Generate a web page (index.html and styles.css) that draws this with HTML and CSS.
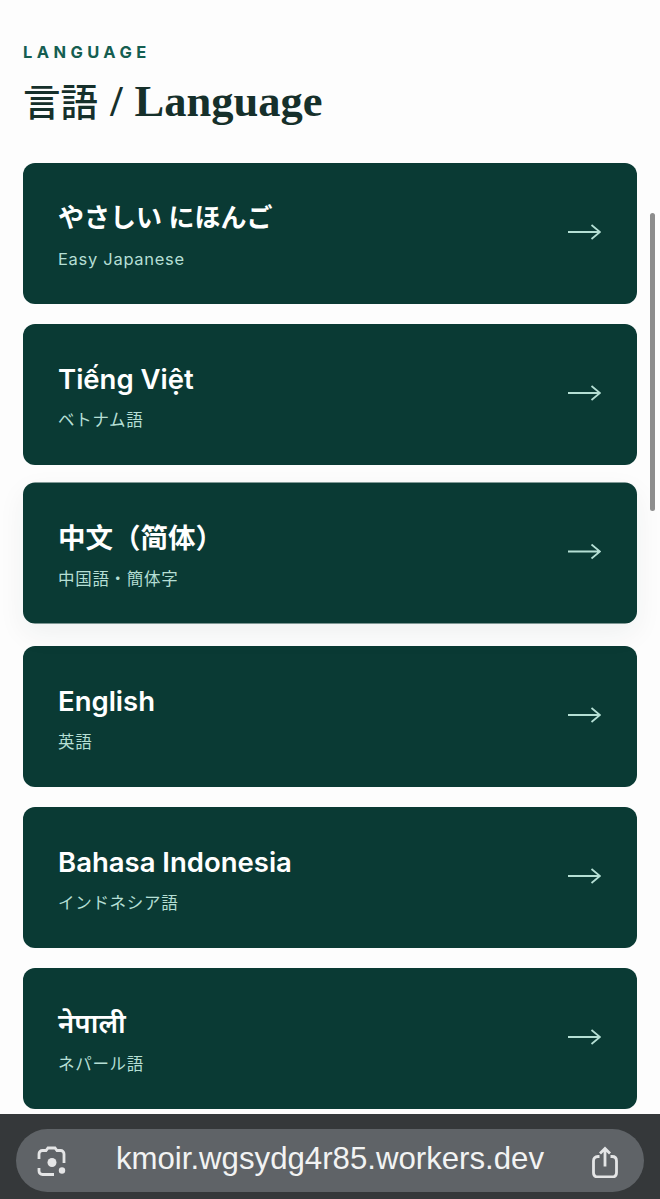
FILE: index.html
```html
<!DOCTYPE html>
<html lang="ja">
  <head>
    <meta charset="UTF-8" />
    <meta name="viewport" content="width=device-width, initial-scale=1.0" />
    <title>言語 / Language</title>
    <link rel="stylesheet" href="styles.css">
  </head>
  <body>
    <div class="page">
      <header class="head">
        <p class="eyebrow">LANGUAGE</p>
        <h1 class="title"><span class="titleCjk">言語</span> / Language</h1>
      </header>

      <ul class="langList">
        <li>
          <a class="langCard" href="#">
            <span class="langText">
              <span class="langName langName-ja">やさしい にほんご</span>
              <span class="langSub">Easy Japanese</span>
            </span>
            <svg class="arrow" viewBox="0 0 33 16"><path d="M0 8H32M23.500 1L32 8L23.500 15" /></svg>
          </a>
        </li>
        <li>
          <a class="langCard" href="#">
            <span class="langText">
              <span class="langName" lang="vi">Tiếng Việt</span>
              <span class="langSub">ベトナム語</span>
            </span>
            <svg class="arrow" viewBox="0 0 33 16"><path d="M0 8H32M23.500 1L32 8L23.500 15" /></svg>
          </a>
        </li>
        <li>
          <a class="langCard langCard-raised" href="#">
            <span class="langText">
              <span class="langName" lang="zh-CN">中文（简体）</span>
              <span class="langSub">中国語・簡体字</span>
            </span>
            <svg class="arrow" viewBox="0 0 33 16"><path d="M0 8H32M23.500 1L32 8L23.500 15" /></svg>
          </a>
        </li>
        <li>
          <a class="langCard" href="#">
            <span class="langText">
              <span class="langName" lang="en">English</span>
              <span class="langSub">英語</span>
            </span>
            <svg class="arrow" viewBox="0 0 33 16"><path d="M0 8H32M23.500 1L32 8L23.500 15" /></svg>
          </a>
        </li>
        <li>
          <a class="langCard" href="#">
            <span class="langText">
              <span class="langName" lang="id">Bahasa Indonesia</span>
              <span class="langSub">インドネシア語</span>
            </span>
            <svg class="arrow" viewBox="0 0 33 16"><path d="M0 8H32M23.500 1L32 8L23.500 15" /></svg>
          </a>
        </li>
        <li>
          <a class="langCard" href="#">
            <span class="langText">
              <span class="langName" lang="ne">नेपाली</span>
              <span class="langSub">ネパール語</span>
            </span>
            <svg class="arrow" viewBox="0 0 33 16"><path d="M0 8H32M23.500 1L32 8L23.500 15" /></svg>
          </a>
        </li>
      </ul>
    </div>

    <div class="scrollThumb"></div>

    <div class="browserBar">
      <div class="urlPill">
        <svg class="lensIcon" viewBox="0 0 32 32">
          <path class="iconLine" d="M3 14V9C3 7 4.500 5.500 6.500 5.500H10L12 3H19L21 5.500H24.500C26.500 5.500 28 7 28 9V18" />
          <path class="iconLine" d="M3 23V26C3 28 4.500 29.500 6.500 29.500H18" />
          <circle class="iconFill" cx="16" cy="17.500" r="4.500" />
          <circle class="iconFill" cx="26" cy="25.500" r="3.200" />
        </svg>
        <span class="urlText">kmoir.wgsydg4r85.workers.dev</span>
        <svg class="shareIcon" viewBox="0 0 26 34">
          <path class="iconLine" d="M7.500 12.500H6C3 12.500 1.500 14 1.500 17V28.500C1.500 31.500 3 33 6 33H20C23 33 24.500 31.500 24.500 28.500V17C24.500 14 23 12.500 20 12.500H18.500" />
          <path class="iconLine" d="M13 22.500V5M8 9.500L13 4.500L18 9.500" />
        </svg>
      </div>
    </div>
  </body>
</html>
```

FILE: styles.css
```css
* {
  margin: 0;
  padding: 0;
  box-sizing: border-box;
}
html,
body {
  height: 100%;
  overflow: hidden;
}
body {
  background-color: #fdfdfd;
  font-family: Inter, "Noto Sans CJK JP", "Noto Sans", sans-serif;
  position: relative;
}
.page {
  padding: 42px 23px 0;
}
.head {
  margin-bottom: 34px;
}
.eyebrow {
  font-size: 16.500px;
  line-height: 20px;
  font-weight: 700;
  letter-spacing: 4.400px;
  color: #155e51;
}
.title {
  margin-top: 14px;
  font-family: "Liberation Serif", "Noto Sans CJK JP", serif;
  font-size: 44.500px;
  line-height: 50px;
  font-weight: 700;
  word-spacing: 1px;
  color: #16302b;
}
.titleCjk {
  font-size: 37.500px;
  font-weight: 500;
}
.langList {
  list-style: none;
  display: flex;
  flex-direction: column;
  gap: 20px;
}
.langCard {
  height: 141px;
  padding: 0 36px 0 35px;
  display: flex;
  align-items: center;
  justify-content: space-between;
  background-color: #0a3a34;
  border-radius: 12px;
  text-decoration: none;
}
.langCard-raised {
  transform: translateY(-2.500px);
  box-shadow: 0 10px 28px rgba(11, 59, 54, 0.06);
}
.langText {
  padding-top: 4px;
  display: flex;
  flex-direction: column;
  gap: 13px;
}
.langName {
  font-size: 27.500px;
  line-height: 34px;
  font-weight: 600;
  color: #fff;
}
.langName-ja {
  font-size: 26px;
}
.langSub {
  font-size: 16.500px;
  line-height: 22px;
  letter-spacing: 0.700px;
  color: #b5dfd4;
}
.arrow {
  width: 33px;
  height: 16px;
  margin-bottom: 4px;
  flex-shrink: 0;
  fill: none;
  stroke: #b5dfd4;
  stroke-width: 1.800;
}
.scrollThumb {
  position: absolute;
  top: 213px;
  left: 650px;
  width: 5px;
  height: 298px;
  border-radius: 3px;
  background-color: #8d8d8d;
}
.browserBar {
  position: absolute;
  left: 0;
  right: 0;
  bottom: 0;
  height: 85px;
  padding: 15px 16px 7px;
  background-color: #35383a;
}
.urlPill {
  height: 63px;
  padding: 0 26px 0 20px;
  display: flex;
  align-items: center;
  justify-content: space-between;
  border-radius: 32px;
  background-color: #5f6367;
}
.urlText {
  padding-bottom: 4px;
  font-family: "Liberation Sans", sans-serif;
  font-size: 31.200px;
  color: #f2f3f3;
}
.lensIcon {
  width: 32px;
  height: 32px;
}
.shareIcon {
  width: 26px;
  height: 34px;
}
.iconLine {
  fill: none;
  stroke: #e4e5e6;
  stroke-width: 2.800;
}
.iconFill {
  fill: #e4e5e6;
}
```
